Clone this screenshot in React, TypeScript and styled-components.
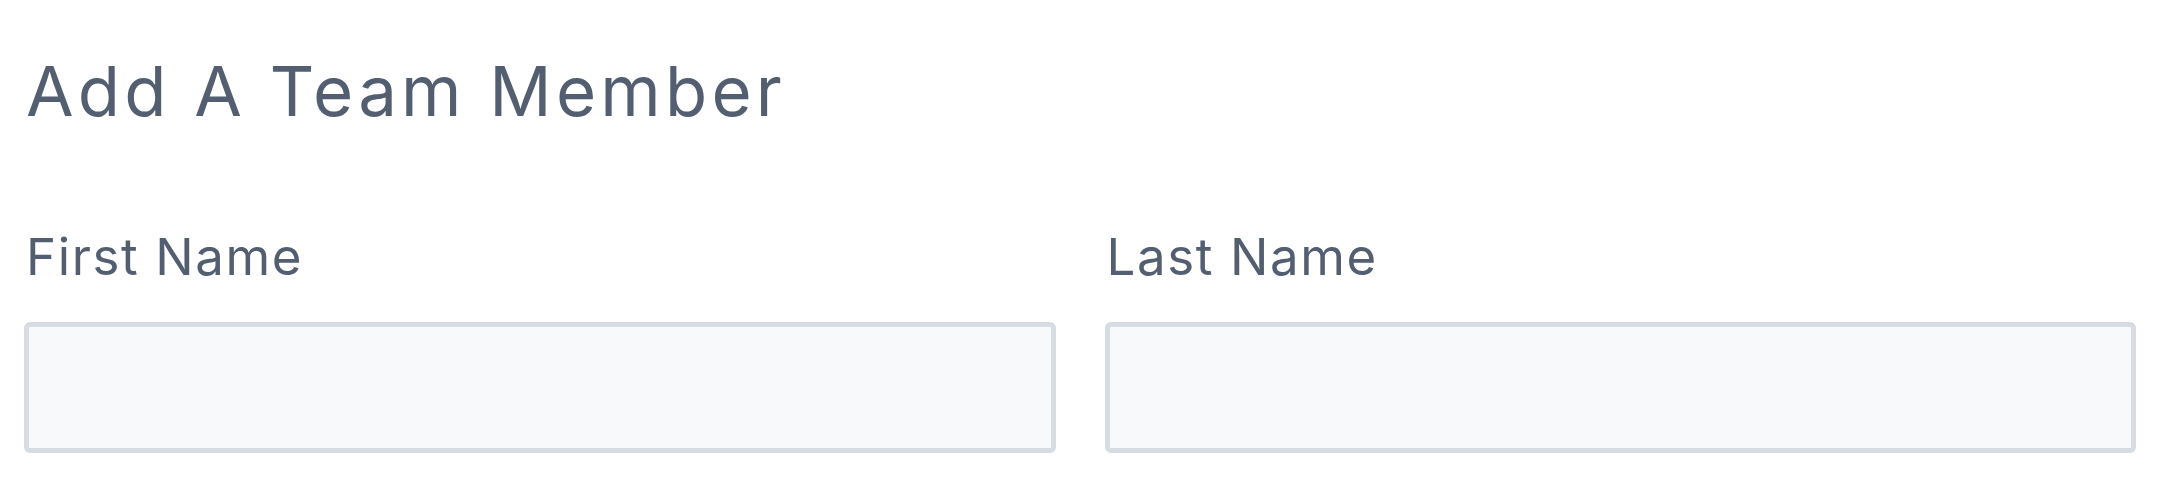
import styled, { createGlobalStyle } from "styled-components";

const GlobalStyle = createGlobalStyle`
  body {
    margin: 0;
    background: #ffffff;
    font-family: Inter, "Noto Sans", sans-serif;
  }
`;

const Page = styled.div`
  padding: 57px 48px 0 24px;
  color: #535f71;
`;

const Title = styled.h1`
  margin: 0 0 105px 2px;
  font-size: 69px;
  font-weight: 400;
  line-height: 1;
  letter-spacing: 4.2px;
`;

const FieldGrid = styled.div`
  display: grid;
  grid-template-columns: 1fr 1fr;
  gap: 49px;
`;

const Field = styled.label`
  display: flex;
  flex-direction: column;
  gap: 40px;
`;

const LabelText = styled.span`
  margin-left: 2px;
  font-size: 51px;
  line-height: 1;
  letter-spacing: 1.6px;
`;

const TextInput = styled.input`
  box-sizing: border-box;
  width: 100%;
  height: 131px;
  border: 5px solid #d7dce2;
  border-radius: 6px;
  background: #f8f9fb;
  font: inherit;
  font-size: 40px;
  padding: 0 24px;
  outline: none;
`;

export default function App() {
  return (
    <>
      <GlobalStyle />
      <Page>
        <Title>Add A Team Member</Title>
        <FieldGrid>
          <Field>
            <LabelText>First Name</LabelText>
            <TextInput type="text" />
          </Field>
          <Field>
            <LabelText>Last Name</LabelText>
            <TextInput type="text" />
          </Field>
        </FieldGrid>
      </Page>
    </>
  );
}
